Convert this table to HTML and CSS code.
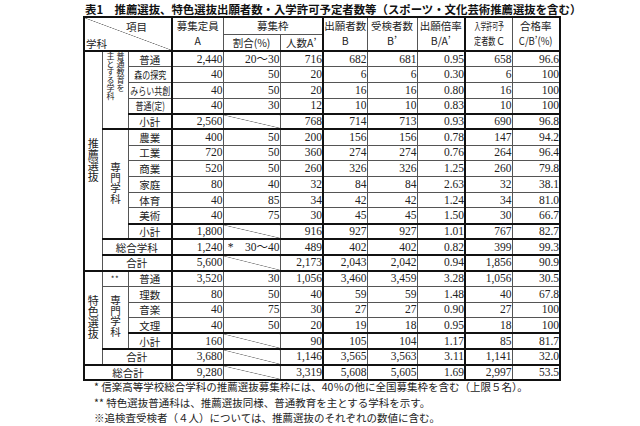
FILE: index.html
```html
<!DOCTYPE html>
<html lang="ja">
<head>
<meta charset="utf-8">
<title>表1</title>
<link rel="stylesheet" href="styles.css">
</head>
<body>
<div class="page">
<h1 class="title">表1　推薦選抜、特色選抜出願者数・入学許可予定者数等（スポーツ・文化芸術推薦選抜を含む）</h1>
<table class="tbl">
<colgroup>
<col class="c1"><col class="c2"><col class="c3"><col class="c4 tk"><col class="c5"><col class="c6"><col class="c7 tk"><col class="c8"><col class="c9"><col class="c10 tk"><col class="c11">
</colgroup>
<thead>
<tr class="hr1">
<th colspan="3" rowspan="2" class="corner"><div class="ko">項目</div><div class="ga">学科</div></th>
<th rowspan="2" class="hh"><div>募集定員</div><div>A</div></th>
<th colspan="2" class="hs">募集枠</th>
<th rowspan="2" class="hh"><div>出願者数</div><div>B</div></th>
<th rowspan="2" class="hh"><div>受検者数</div><div>B’</div></th>
<th rowspan="2" class="hh"><div>出願倍率</div><div>B/A’</div></th>
<th rowspan="2" class="hh"><div><span class="cond c55">入学許可予</span></div><div><span class="cond c68">定者数</span> C</div></th>
<th rowspan="2" class="hh"><div>合格率</div><div><span class="cond c90">C/B’(%)</span></div></th>
</tr>
<tr class="hr2">
<th class="hs">割合(%)</th>
<th class="hs">人数A’</th>
</tr>
</thead>
<tbody>
<tr>
<td rowspan="14" class="v"><span class="vt">推薦選抜</span></td>
<td rowspan="5" class="vtop"><span class="vs">普通教育を<br>主とする学科</span></td>
<td class="l">普通</td><td class="n">2,440</td><td class="n">20～30</td><td class="n">716</td><td class="n">682</td><td class="n">681</td><td class="n">0.95</td><td class="n">658</td><td class="n">96.6</td>
</tr>
<tr>
<td class="l"><span class="cond c78">森の探究</span></td><td class="n">40</td><td class="n">50</td><td class="n">20</td><td class="n">6</td><td class="n">6</td><td class="n">0.30</td><td class="n">6</td><td class="n">100</td>
</tr>
<tr>
<td class="l"><span class="cond c78">みらい共創</span></td><td class="n">40</td><td class="n">50</td><td class="n">20</td><td class="n">16</td><td class="n">16</td><td class="n">0.80</td><td class="n">16</td><td class="n">100</td>
</tr>
<tr>
<td class="l"><span class="cond c78">普通(定)</span></td><td class="n">40</td><td class="n">30</td><td class="n">12</td><td class="n">10</td><td class="n">10</td><td class="n">0.83</td><td class="n">10</td><td class="n">100</td>
</tr>
<tr class="tot">
<td class="l">小計</td><td class="n">2,560</td><td class="dg"></td><td class="n">768</td><td class="n">714</td><td class="n">713</td><td class="n">0.93</td><td class="n">690</td><td class="n">96.8</td>
</tr>
<tr>
<td rowspan="7" class="v"><span class="vt vm">専門学科</span></td>
<td class="l">農業</td><td class="n">400</td><td class="n">50</td><td class="n">200</td><td class="n">156</td><td class="n">156</td><td class="n">0.78</td><td class="n">147</td><td class="n">94.2</td>
</tr>
<tr>
<td class="l">工業</td><td class="n">720</td><td class="n">50</td><td class="n">360</td><td class="n">274</td><td class="n">274</td><td class="n">0.76</td><td class="n">264</td><td class="n">96.4</td>
</tr>
<tr>
<td class="l">商業</td><td class="n">520</td><td class="n">50</td><td class="n">260</td><td class="n">326</td><td class="n">326</td><td class="n">1.25</td><td class="n">260</td><td class="n">79.8</td>
</tr>
<tr>
<td class="l">家庭</td><td class="n">80</td><td class="n">40</td><td class="n">32</td><td class="n">84</td><td class="n">84</td><td class="n">2.63</td><td class="n">32</td><td class="n">38.1</td>
</tr>
<tr>
<td class="l">体育</td><td class="n">40</td><td class="n">85</td><td class="n">34</td><td class="n">42</td><td class="n">42</td><td class="n">1.24</td><td class="n">34</td><td class="n">81.0</td>
</tr>
<tr>
<td class="l">美術</td><td class="n">40</td><td class="n">75</td><td class="n">30</td><td class="n">45</td><td class="n">45</td><td class="n">1.50</td><td class="n">30</td><td class="n">66.7</td>
</tr>
<tr class="tot">
<td class="l">小計</td><td class="n">1,800</td><td class="dg"></td><td class="n">916</td><td class="n">927</td><td class="n">927</td><td class="n">1.01</td><td class="n">767</td><td class="n">82.7</td>
</tr>
<tr>
<td colspan="2" class="l">総合学科</td><td class="n">1,240</td><td class="n ast">*　30～40</td><td class="n">489</td><td class="n">402</td><td class="n">402</td><td class="n">0.82</td><td class="n">399</td><td class="n">99.3</td>
</tr>
<tr class="tot">
<td colspan="2" class="l">合計</td><td class="n">5,600</td><td class="dg"></td><td class="n">2,173</td><td class="n">2,043</td><td class="n">2,042</td><td class="n">0.94</td><td class="n">1,856</td><td class="n">90.9</td>
</tr>
<tr>
<td rowspan="6" class="v"><span class="vt">特色選抜</span></td>
<td class="l star">**</td>
<td class="l">普通</td><td class="n">3,520</td><td class="n">30</td><td class="n">1,056</td><td class="n">3,460</td><td class="n">3,459</td><td class="n">3.28</td><td class="n">1,056</td><td class="n">30.5</td>
</tr>
<tr>
<td rowspan="4" class="v"><span class="vt vm">専門学科</span></td>
<td class="l">理数</td><td class="n">80</td><td class="n">50</td><td class="n">40</td><td class="n">59</td><td class="n">59</td><td class="n">1.48</td><td class="n">40</td><td class="n">67.8</td>
</tr>
<tr>
<td class="l">音楽</td><td class="n">40</td><td class="n">75</td><td class="n">30</td><td class="n">27</td><td class="n">27</td><td class="n">0.90</td><td class="n">27</td><td class="n">100</td>
</tr>
<tr>
<td class="l">文理</td><td class="n">40</td><td class="n">50</td><td class="n">20</td><td class="n">19</td><td class="n">18</td><td class="n">0.95</td><td class="n">18</td><td class="n">100</td>
</tr>
<tr class="tot">
<td class="l">小計</td><td class="n">160</td><td class="dg"></td><td class="n">90</td><td class="n">105</td><td class="n">104</td><td class="n">1.17</td><td class="n">85</td><td class="n">81.7</td>
</tr>
<tr class="tot">
<td colspan="2" class="l">合計</td><td class="n">3,680</td><td class="dg"></td><td class="n">1,146</td><td class="n">3,565</td><td class="n">3,563</td><td class="n">3.11</td><td class="n">1,141</td><td class="n">32.0</td>
</tr>
<tr class="tot">
<td colspan="3" class="l">総合計</td><td class="n">9,280</td><td class="dg"></td><td class="n">3,319</td><td class="n">5,608</td><td class="n">5,605</td><td class="n">1.69</td><td class="n">2,997</td><td class="n">53.5</td>
</tr>
</tbody>
</table>
<div class="notes">
<p>* 信楽高等学校総合学科の推薦選抜募集枠には、40％の他に全国募集枠を含む（上限５名）。</p>
<p>** 特色選抜普通科は、推薦選抜同様、普通教育を主とする学科を示す。</p>
<p>※追検査受検者（４人）については、推薦選抜のそれぞれの数値に含む。</p>
</div>
</div>
</body>
</html>
```

FILE: styles.css
```css
html, body {
  margin: 0;
  padding: 0;
  background: #ffffff;
}
body {
  font-family: "Noto Sans CJK JP", "Noto Sans", sans-serif;
  color: #222222;
}
.page {
  padding: 2px 0 0 83px;
}
.title {
  margin: 0;
  padding-left: 2px;
  font-size: 11.4px;
  font-weight: 700;
  line-height: 14px;
  height: 14px;
  white-space: nowrap;
  color: #111111;
}
.tbl {
  border-collapse: collapse;
  table-layout: fixed;
  width: 477px;
  border: 2px solid #111111;
  font-size: 10.5px;
}
.tbl th,
.tbl td {
  border: 1px solid #555555;
  padding: 0;
  font-weight: 400;
  line-height: 13px;
  white-space: nowrap;
  overflow: visible;
}
col.c1 { width: 18px; }
col.c2 { width: 26px; }
col.c3 { width: 44px; }
col.c4 { width: 51px; }
col.c5 { width: 57px; }
col.c6 { width: 43px; }
col.c7 { width: 44px; }
col.c8 { width: 50px; }
col.c9 { width: 48px; }
col.c10 { width: 47px; }
col.c11 { width: 48px; }
col.tk {
  border-left: 2px solid #111111;
}
thead {
  border-bottom: 2px solid #111111;
}
thead tr {
  height: 16.5px;
}
tbody tr {
  height: 15.7px;
}
tr.tot {
  border-top: 2px solid #111111;
  border-bottom: 2px solid #111111;
}
.hh {
  line-height: 15px;
  text-align: center;
  vertical-align: middle;
}
.hh div {
  height: 15px;
}
.hs {
  text-align: center;
  vertical-align: middle;
}
.corner {
  vertical-align: top;
  background: linear-gradient(to top right, transparent calc(50% - 0.6px), #777777 50%, transparent calc(50% + 0.6px));
}
.corner .ko {
  text-align: right;
  padding: 2px 24px 0 0;
}
.corner .ga {
  text-align: left;
  padding: 4px 0 0 1px;
}
.cond {
  display: inline-block;
  white-space: nowrap;
  transform-origin: center;
}
td .cond {
  display: block;
  margin: 0 -20px;
  text-align: center;
}
.c55 { transform: scaleX(0.56); margin: 0 -16px; }
.c68 { transform: scaleX(0.68); margin: 0 -5px 0 -5px; }
.c78 { transform: scaleX(0.76); }
.c90 { transform: scaleX(0.9); margin: 0 -3px; }
.l {
  text-align: center;
  vertical-align: middle;
}
.n {
  text-align: right;
  vertical-align: middle;
  padding-right: 2px;
  font-family: "Liberation Serif", "Noto Sans CJK JP", serif;
  font-size: 11.5px;
}
.ast {
  padding-right: 2px;
}
.star {
  font-size: 8px;
  letter-spacing: 0.5px;
}
.dg {
  background: linear-gradient(to top right, transparent calc(50% - 0.6px), #777777 50%, transparent calc(50% + 0.6px));
}
.v {
  text-align: center;
  vertical-align: middle;
}
.vt {
  display: inline-block;
  writing-mode: vertical-rl;
  font-size: 11px;
  line-height: 12px;
}
.vt.vm {
  font-size: 10.5px;
}
.vtop {
  text-align: center;
  vertical-align: top;
  padding-top: 5px;
}
.vs {
  display: inline-block;
  writing-mode: vertical-rl;
  font-size: 8px;
  line-height: 10px;
  text-align: start;
}
.notes {
  margin-top: -2px;
  padding: 0 0 0 11px;
  font-size: 10.5px;
  line-height: 15.5px;
}
.notes p {
  margin: 0;
  white-space: nowrap;
}
```
